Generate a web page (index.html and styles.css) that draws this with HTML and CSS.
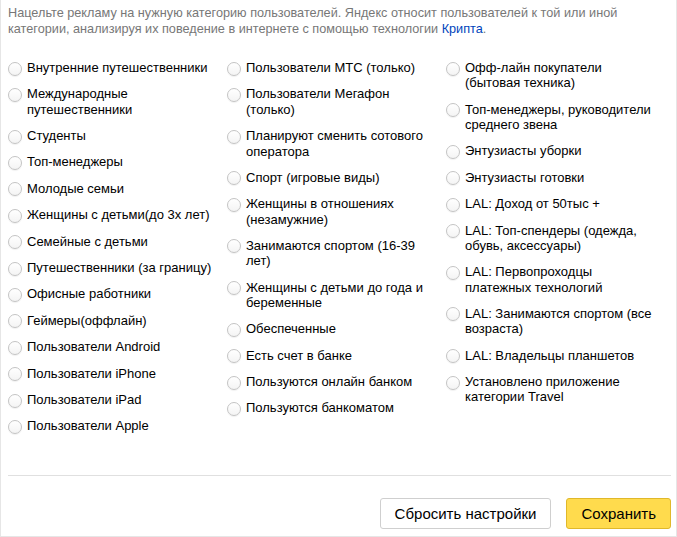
FILE: index.html
```html
<!DOCTYPE html>
<html lang="ru">
<head>
<meta charset="utf-8">
<title>Крипта</title>
<link rel="stylesheet" href="styles.css">
</head>
<body>
<div class="panel">
  <p class="intro">Нацельте рекламу на нужную категорию пользователей. Яндекс относит пользователей к той или иной категории, анализируя их поведение в интернете с помощью технологии <a class="link" href="#">Крипта</a>.</p>
  <div class="list">
    <div class="col">
      <label class="item"><span class="radio"></span><span class="text">Внутренние путешественники</span></label>
      <label class="item"><span class="radio"></span><span class="text">Международные путешественники</span></label>
      <label class="item"><span class="radio"></span><span class="text">Студенты</span></label>
      <label class="item"><span class="radio"></span><span class="text">Топ-менеджеры</span></label>
      <label class="item"><span class="radio"></span><span class="text">Молодые семьи</span></label>
      <label class="item"><span class="radio"></span><span class="text">Женщины с детьми(до 3х лет)</span></label>
      <label class="item"><span class="radio"></span><span class="text">Семейные с детьми</span></label>
      <label class="item"><span class="radio"></span><span class="text">Путешественники (за границу)</span></label>
      <label class="item"><span class="radio"></span><span class="text">Офисные работники</span></label>
      <label class="item"><span class="radio"></span><span class="text">Геймеры(оффлайн)</span></label>
      <label class="item"><span class="radio"></span><span class="text">Пользователи Android</span></label>
      <label class="item"><span class="radio"></span><span class="text">Пользователи iPhone</span></label>
      <label class="item"><span class="radio"></span><span class="text">Пользователи iPad</span></label>
      <label class="item"><span class="radio"></span><span class="text">Пользователи Apple</span></label>
    </div>
    <div class="col">
      <label class="item"><span class="radio"></span><span class="text">Пользователи МТС (только)</span></label>
      <label class="item"><span class="radio"></span><span class="text">Пользователи Мегафон (только)</span></label>
      <label class="item"><span class="radio"></span><span class="text">Планируют сменить сотового оператора</span></label>
      <label class="item"><span class="radio"></span><span class="text">Спорт (игровые виды)</span></label>
      <label class="item"><span class="radio"></span><span class="text">Женщины в отношениях (незамужние)</span></label>
      <label class="item"><span class="radio"></span><span class="text">Занимаются спортом (16-39 лет)</span></label>
      <label class="item"><span class="radio"></span><span class="text">Женщины с детьми до года и беременные</span></label>
      <label class="item"><span class="radio"></span><span class="text">Обеспеченные</span></label>
      <label class="item"><span class="radio"></span><span class="text">Есть счет в банке</span></label>
      <label class="item"><span class="radio"></span><span class="text">Пользуются онлайн банком</span></label>
      <label class="item"><span class="radio"></span><span class="text">Пользуются банкоматом</span></label>
    </div>
    <div class="col">
      <label class="item"><span class="radio"></span><span class="text">Офф-лайн покупатели (бытовая техника)</span></label>
      <label class="item"><span class="radio"></span><span class="text">Топ-менеджеры, руководители среднего звена</span></label>
      <label class="item"><span class="radio"></span><span class="text">Энтузиасты уборки</span></label>
      <label class="item"><span class="radio"></span><span class="text">Энтузиасты готовки</span></label>
      <label class="item"><span class="radio"></span><span class="text">LAL: Доход от 50тыс +</span></label>
      <label class="item"><span class="radio"></span><span class="text">LAL: Топ-спендеры (одежда, обувь, аксессуары)</span></label>
      <label class="item"><span class="radio"></span><span class="text">LAL: Первопроходцы платежных технологий</span></label>
      <label class="item"><span class="radio"></span><span class="text">LAL: Занимаются спортом (все возраста)</span></label>
      <label class="item"><span class="radio"></span><span class="text">LAL: Владельцы планшетов</span></label>
      <label class="item"><span class="radio"></span><span class="text">Установлено приложение категории Travel</span></label>
    </div>
  </div>
  <div class="separator"></div>
  <div class="footer">
    <button class="btn btn-reset" type="button">Сбросить настройки</button>
    <button class="btn btn-save" type="button">Сохранить</button>
  </div>
</div>
</body>
</html>
```

FILE: styles.css
```css
html, body {
  margin: 0;
  padding: 0;
  background: #fff;
}

body {
  font-family: "Liberation Sans", Arial, Helvetica, sans-serif;
  color: #000;
}

.panel {
  box-sizing: border-box;
  width: 677px;
  height: 537px;
  border: 1px solid #e6e6e6;
  border-top: none;
  padding: 0 5px 7px 7px;
  display: flex;
  flex-direction: column;
}

.intro {
  margin: 5px 0 0;
  font-size: 12.7px;
  line-height: 16px;
  color: #777;
}

.link {
  color: #04b;
  text-decoration: none;
}

.list {
  display: grid;
  grid-template-columns: 219px 219px 1fr;
  margin-top: 23px;
  flex: 1;
}

.col {
  display: flex;
  flex-direction: column;
}

.item {
  display: flex;
  align-items: flex-start;
  margin-bottom: 10.9px;
  font-size: 13px;
  line-height: 15.4px;
  color: #000;
  cursor: pointer;
}

.radio {
  flex: none;
  box-sizing: border-box;
  width: 14px;
  height: 14px;
  margin-top: 1.5px;
  margin-right: 5px;
  border-radius: 50%;
  border: 1px solid #c4c4c4;
  background: linear-gradient(#ffffff, #f4f4f4);
  box-shadow: 0 1px 1px rgba(0, 0, 0, 0.06);
}

.text {
  max-width: 190px;
}

.separator {
  height: 0;
  border-top: 1px solid #e0e0e0;
}

.footer {
  display: flex;
  justify-content: flex-end;
  gap: 15px;
  padding-top: 22px;
}

.btn {
  box-sizing: border-box;
  height: 31px;
  padding: 0 14px;
  border-radius: 3px;
  font-family: "Liberation Sans", Arial, Helvetica, sans-serif;
  font-size: 15px;
  line-height: 29px;
  color: #000;
  cursor: pointer;
}

.btn-reset {
  background: #fff;
  border: 1px solid #cfcfcf;
}

.btn-save {
  background: #ffdb4d;
  border: 1px solid #e0b82a;
}
```
